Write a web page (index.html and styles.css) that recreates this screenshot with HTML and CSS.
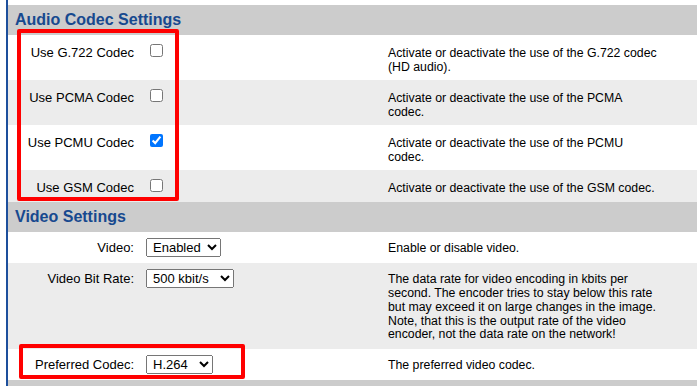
FILE: index.html
```html
<!DOCTYPE html>
<html lang="en">
<head>
  <meta charset="UTF-8">
  <title>Codec Settings</title>
  <link rel="stylesheet" href="styles.css">
</head>
<body>
  <div class="page">
    <table class="settings">
      <colgroup>
        <col class="col-label">
        <col class="col-input">
        <col>
      </colgroup>

      <!-- Audio codecs -->
      <tr class="section">
        <th colspan="3">Audio Codec Settings</th>
      </tr>
      <tr class="check">
        <td class="label">Use G.722 Codec</td>
        <td class="input"><input type="checkbox"></td>
        <td class="desc">Activate or deactivate the use of the G.722 codec (HD audio).</td>
      </tr>
      <tr class="check alt">
        <td class="label">Use PCMA Codec</td>
        <td class="input"><input type="checkbox"></td>
        <td class="desc">Activate or deactivate the use of the PCMA codec.</td>
      </tr>
      <tr class="check">
        <td class="label">Use PCMU Codec</td>
        <td class="input"><input type="checkbox" checked></td>
        <td class="desc">Activate or deactivate the use of the PCMU codec.</td>
      </tr>
      <tr class="check alt">
        <td class="label">Use GSM Codec</td>
        <td class="input"><input type="checkbox"></td>
        <td class="desc">Activate or deactivate the use of the GSM codec.</td>
      </tr>

      <!-- Video -->
      <tr class="section">
        <th colspan="3">Video Settings</th>
      </tr>
      <tr>
        <td class="label">Video:</td>
        <td class="input">
          <select class="sel-video">
            <option selected>Enabled</option>
            <option>Disabled</option>
          </select>
        </td>
        <td class="desc">Enable or disable video.</td>
      </tr>
      <tr class="alt">
        <td class="label">Video Bit Rate:</td>
        <td class="input">
          <select class="sel-rate">
            <option>250 kbit/s</option>
            <option selected>500 kbit/s</option>
            <option>1000 kbit/s</option>
          </select>
        </td>
        <td class="desc">The data rate for video encoding in kbits per second. The encoder tries to stay below this rate but may exceed it on large changes in the image. Note, that this is the output rate of the video encoder, not the data rate on the network!</td>
      </tr>
      <tr>
        <td class="label">Preferred Codec:</td>
        <td class="input">
          <select class="sel-codec">
            <option selected>H.264</option>
            <option>VP8</option>
          </select>
        </td>
        <td class="desc">The preferred video codec.</td>
      </tr>
      <tr class="section">
        <th colspan="3">&nbsp;</th>
      </tr>
    </table>

    <!-- red markers drawn over the screenshot -->
    <div class="mark mark-audio"></div>
    <div class="mark mark-codec"></div>
  </div>
</body>
</html>
```

FILE: styles.css
```css
body {
  margin: 0;
  background: #fff;
  color: #000;
  font-family: "Liberation Sans", Arial, sans-serif;
}

/* Page frame with the blue rule on the left */
.page {
  position: relative;
  margin-left: 6px;
  padding-top: 5px;
  border-left: 2px solid #1d4f9c;
}

/* Settings table */
.settings {
  width: 100%;
  border-collapse: collapse;
  table-layout: fixed;
}
.col-label {
  width: 132px;
}
.col-input {
  width: 242px;
}

.section th {
  background: #cccccc;
  color: #17498f;
  font-size: 16px;
  font-weight: bold;
  text-align: left;
  padding: 6px 7px;
}

.settings td {
  vertical-align: baseline;
  padding: 8px 6px 6.5px;
}
.settings .check td {
  padding-bottom: 5.5px;
}
.alt td {
  background: #ececec;
}

.settings td.label {
  text-align: right;
  font-size: 13px;
  white-space: nowrap;
}
.settings td.input {
  padding-top: 3px;
}
.settings td.desc {
  font-size: 12.3px;
  line-height: 13.8px;
  padding-right: 40px;
}

.input input[type="checkbox"] {
  margin: 6px 3px 0 4px;
}

.input select {
  box-sizing: border-box;
  height: 19px;
  padding: 0 2px;
  font-family: "Liberation Sans", Arial, sans-serif;
  font-size: 13px;
  color: #000;
}
.sel-video {
  width: 75px;
}
.sel-rate {
  width: 88px;
}
.sel-codec {
  width: 67px;
}

/* Red annotation boxes */
.mark {
  position: absolute;
  box-sizing: border-box;
  border: 4px solid #ff0000;
  border-radius: 2px;
}
.mark-audio {
  left: 9px;
  top: 29px;
  width: 162px;
  height: 172px;
}
.mark-codec {
  left: 11px;
  top: 344px;
  width: 226px;
  height: 35px;
}
```
